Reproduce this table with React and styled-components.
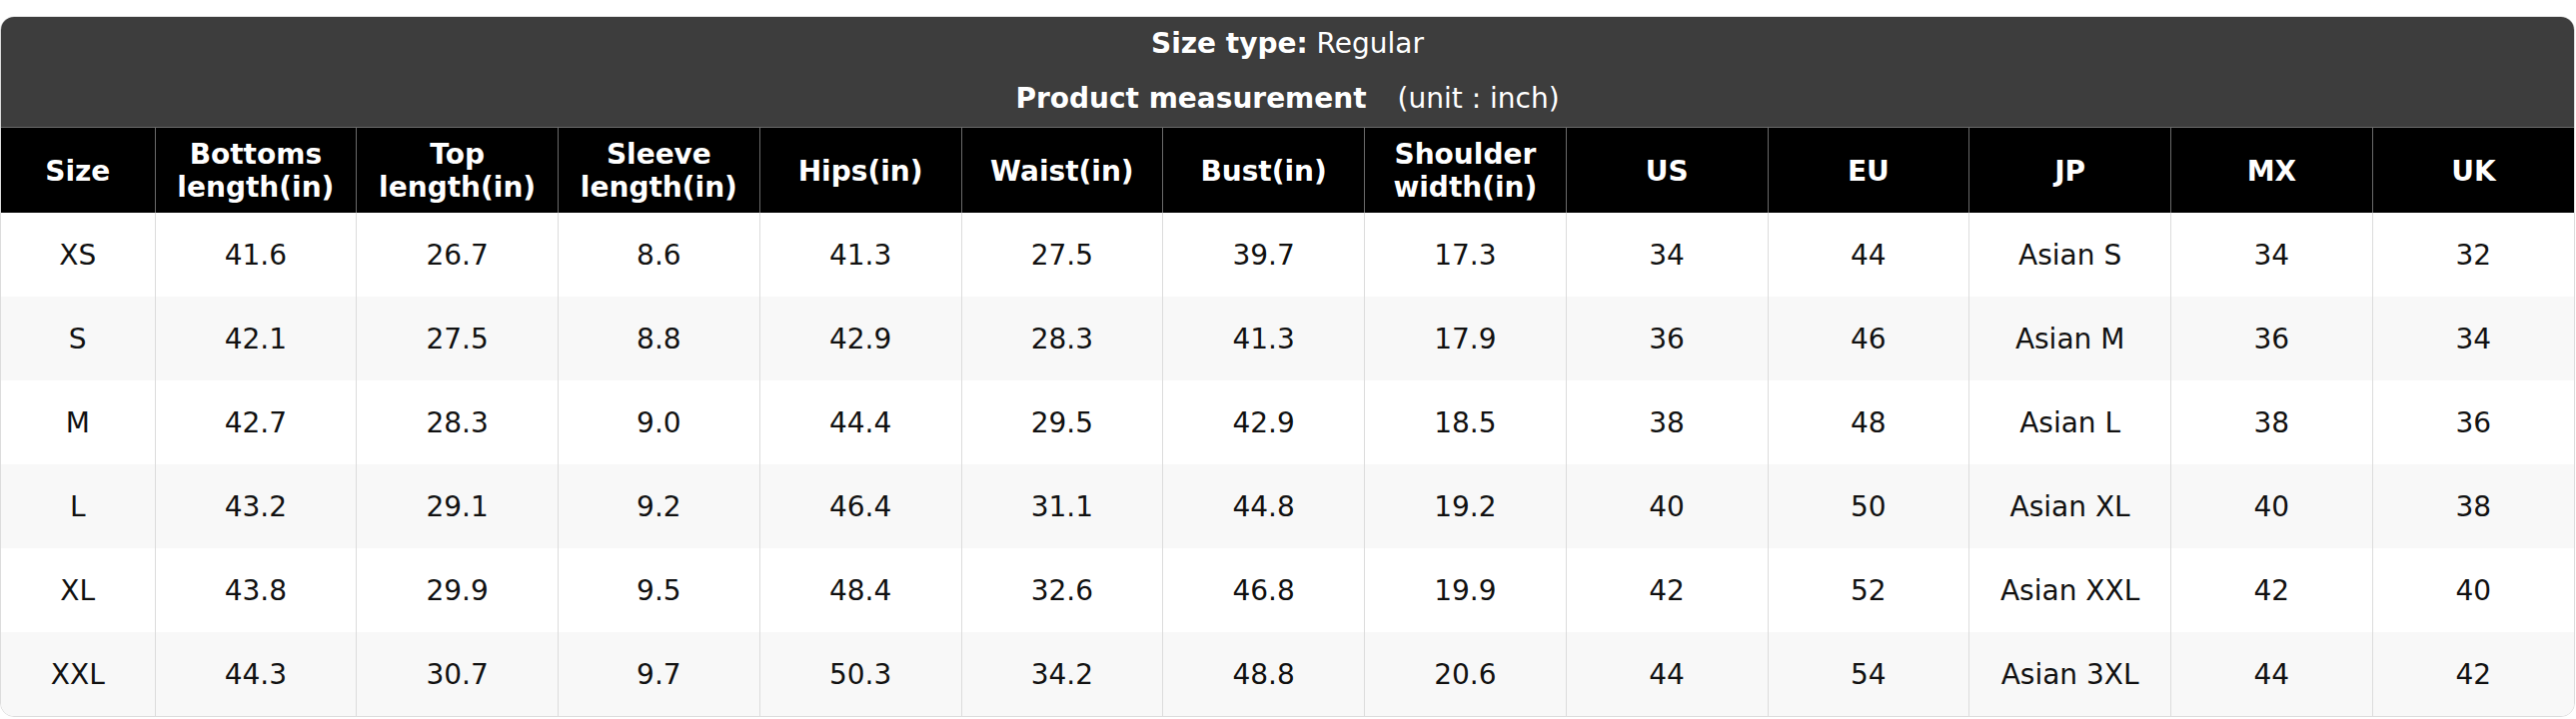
import React from "react";
import styled, { createGlobalStyle } from "styled-components";

const GlobalStyle = createGlobalStyle`
  body {
    margin: 0;
    background: #fff;
    font-family: "DejaVu Sans", "Noto Sans", sans-serif;
  }
`;

const Page = styled.div`
  padding: 16px 1px 0 0;
`;

const Card = styled.div`
  border: 1px solid #dcdcdc;
  border-radius: 14px;
  overflow: hidden;
  background: #fff;
`;

const TitleBar = styled.div`
  background: #3d3d3d;
  color: #fff;
  text-align: center;
  padding-bottom: 1px;
`;

const TitleLine = styled.div`
  font-size: 28px;
  line-height: 32px;
  padding: ${(p) => (p.$second ? "12px 0 11px" : "11px 0 11px")};
`;

const Strong = styled.b`
  font-weight: 700;
`;

const Unit = styled.span`
  margin-left: 31px;
  font-weight: 400;
`;

const Table = styled.table`
  width: 100%;
  border-collapse: collapse;
  table-layout: fixed;
`;

const HeadRow = styled.tr`
  height: 85px;
`;

const HeadCell = styled.th`
  background: #000;
  color: #fff;
  font-size: 28px;
  font-weight: 700;
  line-height: 33px;
  padding: 2px 4px 0;
  border-top: 1px solid #6a6a6a;
  border-left: 1px solid #6a6a6a;
  vertical-align: middle;
  text-align: center;
  &:first-child {
    border-left: none;
  }
`;

const Row = styled.tr`
  height: 84px;
  background: ${(p) => (p.$alt ? "#f8f8f8" : "#fff")};
`;

const Cell = styled.td`
  font-size: 28px;
  line-height: 32px;
  color: #111;
  padding: 2px 4px 0;
  border-left: 1px solid #dcdcdc;
  text-align: center;
  vertical-align: middle;
  &:first-child {
    border-left: none;
  }
`;

const columns = [
  ["Size"],
  ["Bottoms", "length(in)"],
  ["Top", "length(in)"],
  ["Sleeve", "length(in)"],
  ["Hips(in)"],
  ["Waist(in)"],
  ["Bust(in)"],
  ["Shoulder", "width(in)"],
  ["US"],
  ["EU"],
  ["JP"],
  ["MX"],
  ["UK"],
];

const rows = [
  ["XS", "41.6", "26.7", "8.6", "41.3", "27.5", "39.7", "17.3", "34", "44", "Asian S", "34", "32"],
  ["S", "42.1", "27.5", "8.8", "42.9", "28.3", "41.3", "17.9", "36", "46", "Asian M", "36", "34"],
  ["M", "42.7", "28.3", "9.0", "44.4", "29.5", "42.9", "18.5", "38", "48", "Asian L", "38", "36"],
  ["L", "43.2", "29.1", "9.2", "46.4", "31.1", "44.8", "19.2", "40", "50", "Asian XL", "40", "38"],
  ["XL", "43.8", "29.9", "9.5", "48.4", "32.6", "46.8", "19.9", "42", "52", "Asian XXL", "42", "40"],
  ["XXL", "44.3", "30.7", "9.7", "50.3", "34.2", "48.8", "20.6", "44", "54", "Asian 3XL", "44", "42"],
];

export default function App() {
  return (
    <>
      <GlobalStyle />
      <Page>
        <Card>
          <TitleBar>
            <TitleLine>
              <Strong>Size type:</Strong> Regular
            </TitleLine>
            <TitleLine $second>
              <Strong>Product measurement</Strong>
              <Unit>(unit : inch)</Unit>
            </TitleLine>
          </TitleBar>
          <Table>
            <colgroup>
              <col style={{ width: 154 }} />
              {columns.slice(1).map((c, i) => (
                <col key={i} />
              ))}
            </colgroup>
            <thead>
              <HeadRow>
                {columns.map((lines, i) => (
                  <HeadCell key={i}>
                    {lines.map((l, j) => (
                      <div key={j}>{l}</div>
                    ))}
                  </HeadCell>
                ))}
              </HeadRow>
            </thead>
            <tbody>
              {rows.map((r, i) => (
                <Row key={i} $alt={i % 2 === 1}>
                  {r.map((v, j) => (
                    <Cell key={j}>{v}</Cell>
                  ))}
                </Row>
              ))}
            </tbody>
          </Table>
        </Card>
      </Page>
    </>
  );
}
